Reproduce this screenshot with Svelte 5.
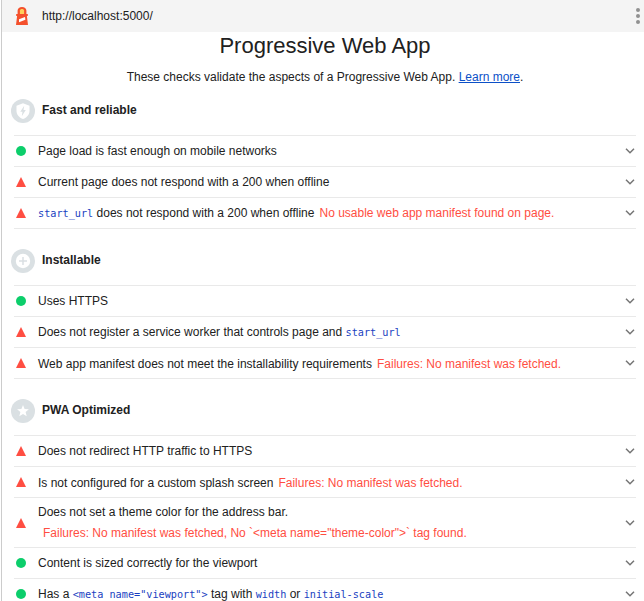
<script>
  const groups = [
    {
      title: 'Fast and reliable',
      badge: 'shield',
      audits: [
        { pass: true, parts: ['Page load is fast enough on mobile networks'] },
        { parts: ['Current page does not respond with a 200 when offline'] },
        {
          parts: [{ code: 'start_url' }, ' does not respond with a 200 when offline'],
          failure: 'No usable web app manifest found on page.'
        }
      ]
    },
    {
      title: 'Installable',
      badge: 'plus',
      audits: [
        { pass: true, parts: ['Uses HTTPS'] },
        { parts: ['Does not register a service worker that controls page and ', { code: 'start_url' }] },
        {
          parts: ['Web app manifest does not meet the installability requirements'],
          failure: 'Failures: No manifest was fetched.',
          low: true
        }
      ]
    },
    {
      title: 'PWA Optimized',
      badge: 'star',
      audits: [
        { parts: ['Does not redirect HTTP traffic to HTTPS'] },
        {
          parts: ['Is not configured for a custom splash screen'],
          failure: 'Failures: No manifest was fetched.',
          low: true
        },
        {
          parts: ['Does not set a theme color for the address bar.'],
          failure: 'Failures: No manifest was fetched, No `<meta name="theme-color">` tag found.',
          stacked: true
        },
        { pass: true, parts: ['Content is sized correctly for the viewport'] },
        {
          pass: true,
          parts: [
            'Has a ',
            { code: '<meta name="viewport">' },
            ' tag with ',
            { code: 'width' },
            ' or ',
            { code: 'initial-scale' }
          ]
        }
      ]
    }
  ];
</script>

<div class="report">
  <header class="topbar">
    <svg class="logo" width="14" height="20" viewBox="0 0 14 20">
      <path d="M2.600 8V4.600C2.600 2.500 4.500 1 7 1s4.400 1.500 4.400 3.600V8h1.400v2h-.9L13 19H1l1.100-9h-.9V8z" fill="#f4502c" />
      <path d="M4.900 4.600c0-1 .9-1.600 2.100-1.600s2.100.6 2.100 1.600V8H4.900z" fill="#ffd05a" />
      <path d="M4 13.300l6-2.200.4 2.700L4 16.300z" fill="#fff" />
    </svg>
    <span class="url">http://localhost:5000/</span>
    <svg class="menu" width="6" height="18" viewBox="0 0 6 18" fill="#919191">
      <circle cx="3" cy="3" r="2" /><circle cx="3" cy="9" r="2" /><circle cx="3" cy="15" r="2" />
    </svg>
  </header>

  <h1>Progressive Web App</h1>
  <p class="intro">These checks validate the aspects of a Progressive Web App. <a href="#learn">Learn more</a>.</p>

  {#each groups as group}
    <section>
      <div class="group-head">
        <svg width="24" height="24" viewBox="0 0 24 24">
          <circle cx="12" cy="12" r="12" fill="#dae0e3" />
          {#if group.badge === 'shield'}
            <path d="M12 4.200l6.500 2.500v5c0 3.800-2.600 7-6.500 8.200-3.900-1.200-6.500-4.400-6.500-8.200v-5z" fill="#fff" />
            <path d="M13.200 6.800L9.300 12.800h2.200l-.7 4.500 4-6.300h-2.300z" fill="#dae0e3" />
          {:else if group.badge === 'plus'}
            <circle cx="12" cy="12" r="7.200" fill="#fff" />
            <path d="M12 8v8M8 12h8" stroke="#dae0e3" stroke-width="1.500" />
          {:else}
            <path d="M12 6l1.600 4 4.300.3-3.300 2.800 1.100 4.200L12 15l-3.700 2.300 1.100-4.200-3.300-2.800 4.300-.3z" fill="#fff" />
          {/if}
        </svg>
        <h2>{group.title}</h2>
      </div>
      <div class="audits">
        {#each group.audits as audit}
          <div class="audit" class:stacked={audit.stacked} class:low={audit.low}>
            <svg class="status" width="10" height="10" viewBox="0 0 10 10">
              {#if audit.pass}
                <circle cx="5" cy="5" r="5" fill="#0cce6b" />
              {:else}
                <path d="M5 0l5 10H0z" fill="#ff4e42" />
              {/if}
            </svg>
            <div class="text">
              <span>{#each audit.parts as part}{#if part.code}<code>{part.code}</code>{:else}{part}{/if}{/each}</span>{#if audit.failure}<span class="failure">{audit.failure}</span>{/if}
            </div>
            <svg class="chevron" width="10" height="6" viewBox="0 0 10 6">
              <path d="M1 .8l4 4 4-4" fill="none" stroke="#757575" stroke-width="1.500" />
            </svg>
          </div>
        {/each}
      </div>
    </section>
  {/each}
</div>

<style>
  :global(body) {
    background: #fff;
    overflow: hidden;
  }
  .report {
    box-sizing: border-box;
    height: 601px;
    margin-left: 1px;
    border-left: 1px solid #ccc;
    overflow: hidden;
    color: #212121;
    font: 12px/20px 'Liberation Sans', Arial, sans-serif;
  }
  .topbar {
    display: flex;
    align-items: center;
    height: 32px;
    padding: 0 3px 0 13px;
    background: #f4f4f4;
  }
  .url {
    flex: 1;
    margin-left: 13px;
  }
  h1 {
    margin: 0 0 0 4px;
    font-size: 22px;
    font-weight: 400;
    line-height: 28px;
    text-align: center;
  }
  .intro {
    margin: 7px 0 0 4px;
    text-align: center;
  }
  a {
    color: #0c50c7;
    text-decoration: underline;
  }
  section {
    margin-bottom: 20px;
  }
  .intro + section {
    margin-top: 12px;
  }
  .group-head {
    display: flex;
    height: 36px;
    padding-left: 9px;
  }
  h2 {
    margin: 1px 0 0 7px;
    font-size: 12px;
    line-height: 20px;
  }
  .group-head svg {
    flex: none;
  }
  .audits {
    margin: 0 8px 0 12px;
    border-bottom: 1px solid #e9e9e9;
  }
  .audit {
    display: flex;
    align-items: center;
    box-sizing: border-box;
    height: 31px;
    padding: 0 1px 0 2px;
    border-top: 1px solid #e9e9e9;
  }
  .status {
    flex: none;
  }
  .text {
    flex: 1;
    margin-left: 12px;
    white-space: nowrap;
  }
  .failure {
    margin-left: 5px;
    color: #ff4e42;
  }
  .low .text {
    padding-top: 2px;
  }
  .stacked {
    height: 50px;
  }
  .stacked .text {
    display: flex;
    flex-direction: column;
    line-height: 21px;
  }
  code {
    color: #1a3fc1;
    font: 10.2px/10px 'DejaVu Sans Mono', monospace;
  }
</style>
